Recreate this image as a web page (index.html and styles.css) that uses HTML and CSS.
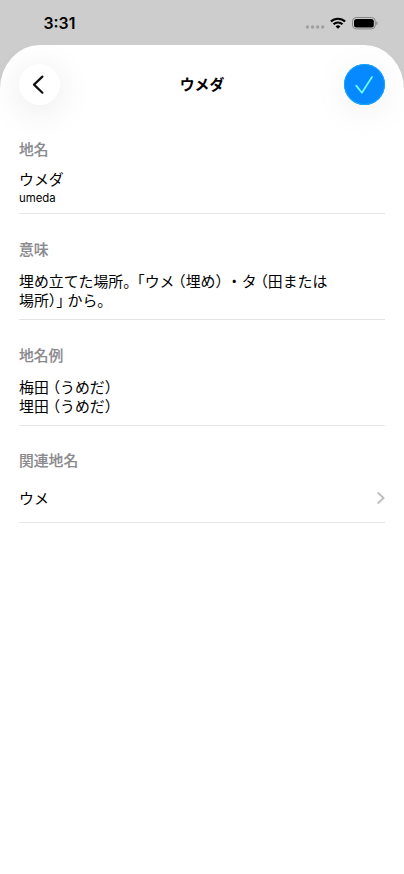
FILE: index.html
```html
<!DOCTYPE html>
<html lang="ja">
<head>
<meta charset="utf-8">
<title>ウメダ</title>
<link rel="stylesheet" href="styles.css">
</head>
<body>
<div class="status">
  <span class="time">3:31</span>
  <div class="indicators">
    <svg class="dots" width="20" height="4" viewBox="0 0 20 4" fill="#a0a0a0"><circle cx="2.4" cy="2" r="1.7"/><circle cx="7.5" cy="2" r="1.7"/><circle cx="12.6" cy="2" r="1.7"/><circle cx="17.7" cy="2" r="1.7"/></svg>
    <svg class="wifi" width="16" height="12" viewBox="0 0 16 12" fill="none" stroke="#000" stroke-width="2.1"><path d="M.9 4.6a10.1 10.1 0 0 1 14.2 0"/><path d="M3.5 7.3a6.4 6.4 0 0 1 9 0"/><path d="M8 11.8 5.6 9.4a3.4 3.4 0 0 1 4.8 0Z" fill="#000" stroke="none"/></svg>
    <svg class="battery" width="26" height="13" viewBox="0 0 26 13"><rect x=".5" y=".5" width="22.8" height="11.4" rx="3.8" fill="none" stroke="#858585"/><rect x="2" y="2" width="19.8" height="8.4" rx="2.5"/><path d="M24.4 4.2c1.6.6 1.6 3.4 0 4Z" fill="#858585"/></svg>
  </div>
</div>
<main class="sheet">
  <header class="bar">
    <button class="round back" aria-label="戻る"><svg width="41" height="41" viewBox="0 0 41 41" fill="none" stroke="#111" stroke-width="2.2" stroke-linecap="round" stroke-linejoin="round"><path d="M23.4 12.6 15 20.6 23.4 28.7"/></svg></button>
    <h1>ウメダ</h1>
    <button class="round done" aria-label="完了"><svg width="41" height="41" viewBox="0 0 41 41" fill="none" stroke="#6ffcff" stroke-width="1.7" stroke-linecap="round" stroke-linejoin="round"><path d="M12.2 21.6 17.9 28.8 28 13"/></svg></button>
  </header>
  <section class="name">
    <h2>地名</h2>
    <p>ウメダ</p>
    <p class="roman">umeda</p>
  </section>
  <section class="meaning">
    <h2>意味</h2>
    <p>埋め立てた場所<span class="half stop">。</span><span class="half corner">「</span>ウメ<span class="half open">（</span>埋め<span class="half close">）</span>・タ<span class="half open">（</span>田または<br>場所<span class="half tight">）</span><span class="half close">」</span>から。</p>
  </section>
  <section class="examples">
    <h2>地名例</h2>
    <p>梅田<span class="half open">（</span>うめだ<span class="half close">）</span><br>埋田<span class="half open">（</span>うめだ<span class="half close">）</span></p>
  </section>
  <section class="related">
    <h2>関連地名</h2>
    <a class="row"><span>ウメ</span><svg width="8" height="12" viewBox="0 0 8 12" fill="none" stroke="#bdbdc0" stroke-width="1.8" stroke-linecap="round" stroke-linejoin="round"><path d="M1.2 1 6.6 6 1.2 11"/></svg></a>
  </section>
</main>
</body>
</html>
```
FILE: styles.css
```css
* { box-sizing: border-box; margin: 0; padding: 0; }
html, body { height: 100%; }
body {
  display: flex;
  flex-direction: column;
  background: #cdcdcd;
  color: #000;
  font-family: "Noto Sans CJK JP", sans-serif;
  font-size: 14.9px;
  line-height: 19px;
  overflow: hidden;
}
.status {
  display: flex;
  justify-content: space-between;
  height: 44.5px;
  padding: 13px 26px 0 43.5px;
}
.time {
  font: 600 15.8px/21px Inter, sans-serif;
}
.indicators { display: flex; align-items: flex-start; }
.dots { margin: 12px 5px 0 0; }
.wifi { margin: 4px 6px 0 0; }
.battery { margin-top: 4px; }
.sheet {
  flex: 1;
  padding: 19px 19px 0;
  background: #fff;
  border-radius: 40px 40px 0 0 / 44px 44px 0 0;
}
.bar {
  display: flex;
  align-items: center;
  justify-content: space-between;
  height: 41px;
}
h1 {
  padding-bottom: 2px;
  font-size: 14.9px;
  font-weight: 700;
}
.round {
  width: 41px;
  height: 41px;
  border: 0;
  border-radius: 50%;
  background: #fff;
  box-shadow: 0 6px 34px 4px rgba(0, 0, 0, .07);
}
.round svg { display: block; }
.done {
  background: #0688ff;
  box-shadow: inset 0 0 0 1px #18a6fa, 0 6px 34px 4px rgba(0, 0, 0, .05);
}
section { border-bottom: 1px solid #e5e5e6; }
h2 {
  color: #8a8a8e;
  font-size: 14.8px;
  font-weight: 500;
  line-height: 19px;
  -webkit-text-stroke: .15px #8a8a8e;
}
.name { height: 109.5px; padding-top: 34px; }
.name p { margin-top: 11px; }
.name .roman {
  margin-top: 3px;
  font: 400 11.4px/15px Inter, sans-serif;
}
.meaning, .examples { height: 106px; padding-top: 25px; }
.meaning p, .examples p { margin-top: 13px; }
.related { height: 97px; padding-top: 24px; }
.row {
  display: flex;
  align-items: center;
  justify-content: space-between;
  height: 19px;
  margin-top: 19px;
}
.half { font-feature-settings: "halt"; }
.stop { margin-right: 6.5px; }
.open { margin-left: 3.8px; }
.close { margin-right: 3.8px; }
```
